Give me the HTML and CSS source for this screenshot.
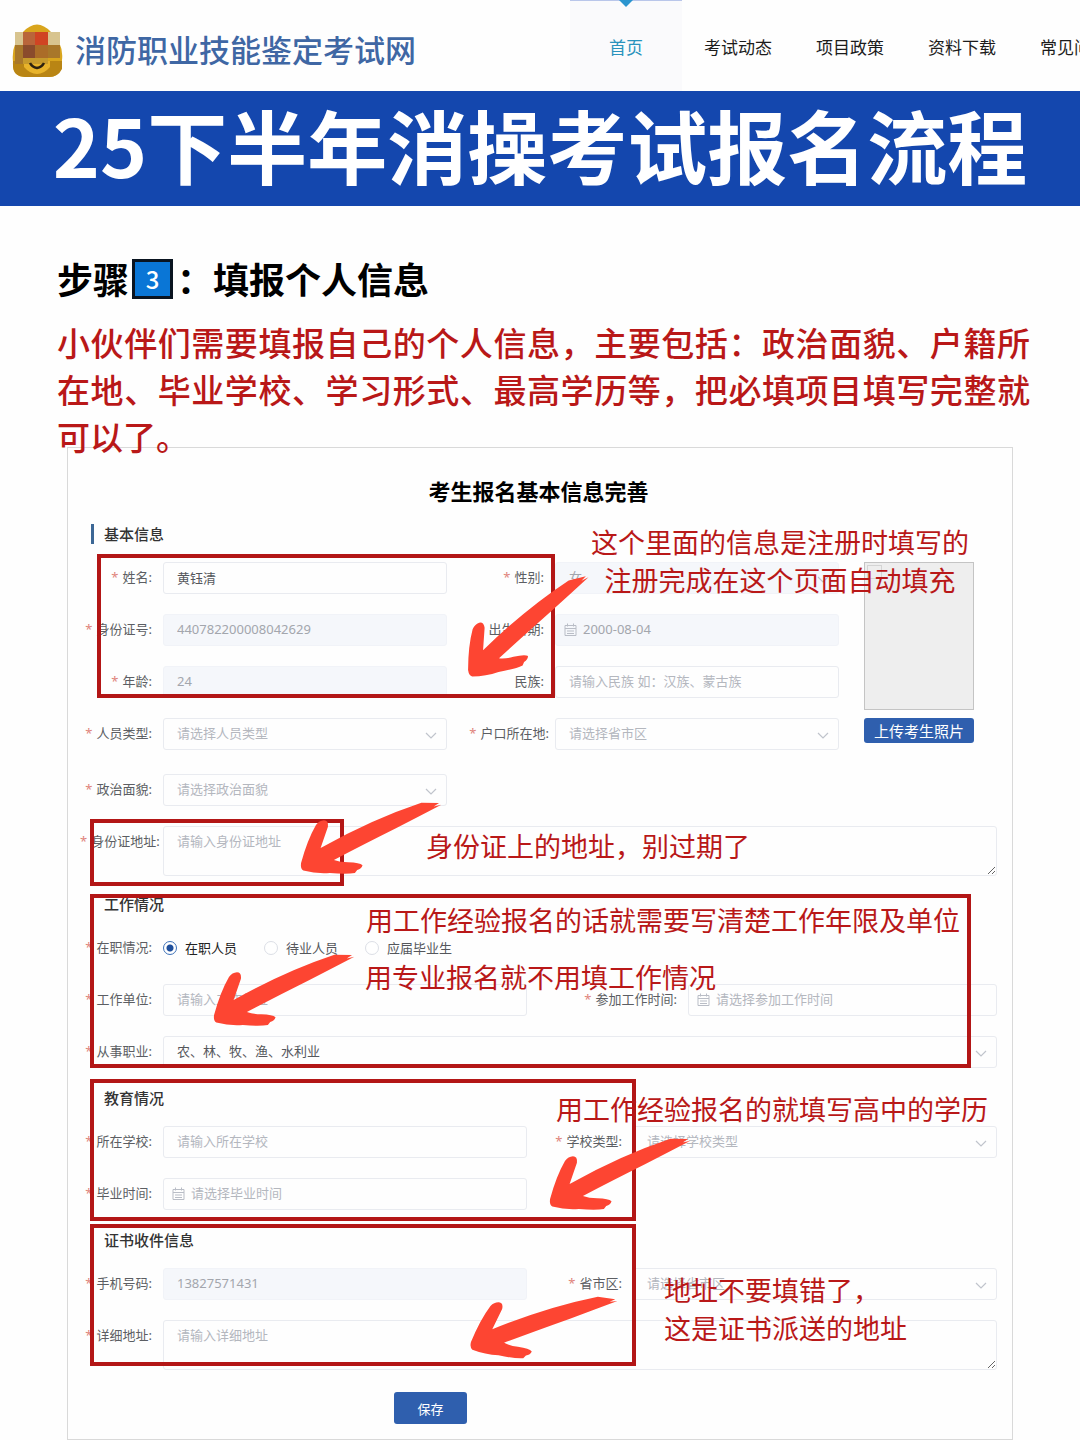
FILE: index.html
```html
<!DOCTYPE html>
<html lang="zh-CN">
<head>
<meta charset="UTF-8">
<meta name="viewport" content="width=device-width, initial-scale=1.0">
<title>25下半年消操考试报名流程</title>
<link rel="stylesheet" href="styles.css">
</head>
<body>
<svg class="sprite" aria-hidden="true">
  <symbol id="arrow" viewBox="0 0 430 225">
    <path fill="#fd4532" d="M425 14 L402 19 L418 9 L365 8 Q215 58 62 144 L84 80 Q86 61 72 61 Q58 62 48 75 Q22 120 3 190 Q1 207 10 212 Q50 222 90 219 Q140 224 165 219 L172 210 Q185 207 188 196 Q180 188 145 187 Q120 187 102 180 Q190 134 290 84 Q360 48 425 14Z"/>
  </symbol>
  <symbol id="chevron" viewBox="0 0 12 12">
    <path fill="none" stroke="#c0c4cc" stroke-width="1.2" d="M1 4l5 5 5-5"/>
  </symbol>
  <symbol id="calendar" viewBox="0 0 13 13">
    <path fill="none" stroke="#b9bdc6" d="M1 2.500h11v10H1zM1 5.500h11M3.500 0.500v3M9.500 0.500v3M3 8h7M3 10.500h7"/>
  </symbol>
</svg>

<header class="topbar">
  <div class="brand">
    <svg class="logo" viewBox="0 0 53 53" aria-hidden="true">
      <path fill="#d9a51d" d="M12 8Q26-7 40 8Q53 20 51 36Q51 53 38 53H14Q1 53 2 38Q0 20 12 8z"/>
      <path fill="#b98514" d="M2 37h49v8q-4 8-13 8H14Q2 52 2 42z"/>
      <path fill="#e8b32b" d="M13 37h26v6q-6 7-13 7t-13-7z"/>
      <path fill="#d8c48f" d="M4 8h10v13H4zM37 8h12v13H37z"/>
      <path fill="#b9653a" d="M12 8h13v13H12z"/>
      <path fill="#d04423" d="M24 8h13v13H24z"/>
      <path fill="#a8772a" d="M4 21h9v19H4zM37 21h12v13H37z"/>
      <path fill="#8a4b2c" d="M12 21h13v13H12z"/>
      <path fill="#ab6c28" d="M24 21h13v13H24z"/>
      <path fill="#c69a2c" d="M12 34h25v6H12z"/>
      <path fill="none" stroke="#2c2110" stroke-width="2.500" d="M19 39q2 4 7 5q5-1 7-5"/>
    </svg>
    <span class="site-name">消防职业技能鉴定考试网</span>
  </div>
  <nav class="nav">
    <a class="ativo" href="#">首页</a>
    <a href="#">考试动态</a>
    <a href="#">项目政策</a>
    <a href="#">资料下载</a>
    <a href="#">常见问题</a>
  </nav>
</header>

<h1 class="banner">25下半年消操考试报名流程</h1>

<main>
  <h2 class="step">步骤<span class="step-num">3</span>：<span>填报个人信息</span></h2>
  <p class="intro">小伙伴们需要填报自己的个人信息，主要包括：政治面貌、户籍所在地、毕业学校、学习形式、最高学历等，把必填项目填写完整就可以了。</p>

  <div class="card">
    <form>
      <h2 class="form-title">考生报名基本信息完善</h2>

      <!-- 基本信息 -->
      <h3>基本信息</h3>
      <div class="basic">
        <div class="grid grid-basic">
          <div class="field">
            <label class="req" for="name">姓名:</label>
            <div class="control"><input type="text" id="name" value="黄钰清"></div>
          </div>
          <div class="field">
            <label class="req" for="gender">性别:</label>
            <div class="control">
              <select id="gender" disabled><option>女</option></select>
              <svg class="chev"><use href="#chevron"/></svg>
            </div>
          </div>
          <div class="field">
            <label class="req" for="idno">身份证号:</label>
            <div class="control"><input type="text" id="idno" value="440782200008042629" disabled></div>
          </div>
          <div class="field">
            <label class="req" for="birth">出生日期:</label>
            <div class="control date">
              <svg class="cal"><use href="#calendar"/></svg>
              <input type="text" id="birth" value="2000-08-04" disabled>
            </div>
          </div>
          <div class="field">
            <label class="req" for="age">年龄:</label>
            <div class="control"><input type="text" id="age" value="24" disabled></div>
          </div>
          <div class="field">
            <label for="nation">民族:</label>
            <div class="control"><input type="text" id="nation" placeholder="请输入民族 如：汉族、蒙古族"></div>
          </div>
          <div class="field">
            <label class="req" for="ptype">人员类型:</label>
            <div class="control">
              <select id="ptype"><option>请选择人员类型</option></select>
              <svg class="chev"><use href="#chevron"/></svg>
            </div>
          </div>
          <div class="field">
            <label class="req long" for="hukou">户口所在地:</label>
            <div class="control">
              <select id="hukou"><option>请选择省市区</option></select>
              <svg class="chev"><use href="#chevron"/></svg>
            </div>
          </div>
          <div class="field spaced">
            <label class="req" for="politics">政治面貌:</label>
            <div class="control">
              <select id="politics"><option>请选择政治面貌</option></select>
              <svg class="chev"><use href="#chevron"/></svg>
            </div>
          </div>
        </div>
        <div class="photo-col">
          <div class="photo"><span class="photo-empty"></span></div>
          <button type="button" class="btn btn-upload">上传考生照片</button>
        </div>
      </div>
      <div class="field area">
        <label class="req long" for="idaddr">身份证地址:</label>
        <div class="control"><textarea id="idaddr" placeholder="请输入身份证地址"></textarea></div>
      </div>

      <!-- 工作情况 -->
      <h3>工作情况</h3>
      <div class="field" role="radiogroup" aria-labelledby="job-label">
        <span class="label req" id="job-label">在职情况:</span>
        <div class="radios">
          <label><input type="radio" name="job" checked>在职人员</label>
          <label><input type="radio" name="job">待业人员</label>
          <label><input type="radio" name="job">应届毕业生</label>
        </div>
      </div>
      <div class="grid grid-wide grid-work">
        <div class="field">
          <label class="req" for="company">工作单位:</label>
          <div class="control"><input type="text" id="company" placeholder="请输入工作单位"></div>
        </div>
        <div class="field">
          <label class="req" for="since">参加工作时间:</label>
          <div class="control date">
            <svg class="cal"><use href="#calendar"/></svg>
            <input type="text" id="since" placeholder="请选择参加工作时间">
          </div>
        </div>
      </div>
      <div class="field">
        <label class="req" for="career">从事职业:</label>
        <div class="control">
          <select id="career" class="filled"><option>农、林、牧、渔、水利业</option></select>
          <svg class="chev"><use href="#chevron"/></svg>
        </div>
      </div>

      <!-- 教育情况 -->
      <h3>教育情况</h3>
      <div class="grid grid-wide">
        <div class="field">
          <label class="req" for="school">所在学校:</label>
          <div class="control"><input type="text" id="school" placeholder="请输入所在学校"></div>
        </div>
        <div class="field">
          <label class="req" for="stype">学校类型:</label>
          <div class="control">
            <select id="stype"><option>请选择学校类型</option></select>
            <svg class="chev"><use href="#chevron"/></svg>
          </div>
        </div>
        <div class="field">
          <label class="req" for="grad">毕业时间:</label>
          <div class="control date">
            <svg class="cal"><use href="#calendar"/></svg>
            <input type="text" id="grad" placeholder="请选择毕业时间">
          </div>
        </div>
      </div>

      <!-- 证书收件信息 -->
      <h3>证书收件信息</h3>
      <div class="grid grid-wide">
        <div class="field">
          <label class="req" for="phone">手机号码:</label>
          <div class="control"><input type="text" id="phone" value="13827571431" disabled></div>
        </div>
        <div class="field">
          <label class="req" for="region">省市区:</label>
          <div class="control">
            <select id="region"><option>请选择省市区</option></select>
            <svg class="chev"><use href="#chevron"/></svg>
          </div>
        </div>
      </div>
      <div class="field area">
        <label class="req" for="addr">详细地址:</label>
        <div class="control"><textarea id="addr" placeholder="请输入详细地址"></textarea></div>
      </div>

      <div class="actions"><button type="button" class="btn btn-save">保存</button></div>
    </form>

    <!-- 标注 -->
    <div class="notes">
      <div class="frame frame-basic"></div>
      <div class="frame frame-addr"></div>
      <div class="frame frame-work"></div>
      <div class="frame frame-edu"></div>
      <div class="frame frame-cert"></div>
      <svg class="arrow arrow-basic"><use href="#arrow"/></svg>
      <svg class="arrow arrow-addr"><use href="#arrow"/></svg>
      <svg class="arrow arrow-work"><use href="#arrow"/></svg>
      <svg class="arrow arrow-edu"><use href="#arrow"/></svg>
      <svg class="arrow arrow-cert"><use href="#arrow"/></svg>
      <p class="note note-basic">这个里面的信息是注册时填写的<br>注册完成在这个页面自动填充</p>
      <p class="note note-addr">身份证上的地址，别过期了</p>
      <p class="note note-work">用工作经验报名的话就需要写清楚工作年限及单位</p>
      <p class="note note-major">用专业报名就不用填工作情况</p>
      <p class="note note-edu">用工作经验报名的就填写高中的学历</p>
      <p class="note note-cert">地址不要填错了，<br>这是证书派送的地址</p>
    </div>
  </div>
</main>
</body>
</html>
```
FILE: styles.css
```css
:root { --azul:#1447ae; --btn:#2f5fae; --red:#b91818; --line:#e9ebf0; --ph:#b4b7be; }
* { box-sizing:border-box; margin:0; padding:0; }
body {
  font-family:"Noto Sans CJK SC",sans-serif;
  background:#fefefe; color:#000;
}
.sprite { position:absolute; width:0; height:0; }

/* topo */
.topbar { display:flex; height:91px; overflow:hidden; }
.brand {
  display:flex; flex:none; align-items:center; gap:11px;
  padding:10px 0 0 11px; margin-right:154px;
}
.logo { width:53px; height:53px; }
.site-name { padding-bottom:4px; font-size:31px; line-height:40px; font-weight:500; color:#3f67a4; white-space:nowrap; }
.nav { display:flex; flex:none; }
.nav a {
  position:relative; width:112px; padding-top:2px;
  display:flex; align-items:center; justify-content:center;
  font-size:17px; color:#1c1c1c; text-decoration:none;
}
.nav .ativo { background:#fafafc; color:#2a93bd; box-shadow:inset 0 1px #b9c6ea; }
.nav .ativo::before {
  content:""; position:absolute; top:0; left:50%; margin-left:-7px;
  border:7px solid transparent; border-top-color:#2b95cf; border-bottom:0;
}
.banner {
  background:var(--azul); color:#fff; text-align:center; padding-bottom:10px;
  font-size:80px; line-height:105px; font-weight:700; white-space:nowrap;
}

main { padding:48px 0 0; }
.step {
  display:flex; align-items:center; padding:0 57px;
  font-size:36px; line-height:48px; font-weight:700;
}
.step-num {
  width:41px; height:40px; margin:2px 4px 0 3px; border:3px solid #0a1420;
  background:#0a76d6; color:#fff; font-size:24px; line-height:34px; font-weight:500; text-align:center;
}
.intro {
  position:relative; z-index:2; margin:17px 50px 0 57px;
  font-size:33px; line-height:47px; font-weight:500; color:var(--red); text-align:justify;
}

.card {
  position:relative; margin:-13px 67px 0; padding:28px 15px 15px 12px;
  border:1px solid #d9d9d9;
}
.form-title { font-size:22px; line-height:28px; font-weight:700; text-align:center; }
h3 {
  margin:20px 0 18px 11px; padding-left:10px; border-left:3px solid #3c6795;
  font-size:15px; line-height:20px; font-weight:500; color:#333;
}
form { display:flex; flex-direction:column; }
.field { display:flex; min-height:32px; }
.field + .field, .grid + .field, .field + .grid, .basic + .field { margin-top:20px; }
.grid { display:grid; row-gap:20px; }
.grid .field + .field { margin-top:0; }
.grid-basic { flex:1; grid-template-columns:367fr 392fr; }
.grid-wide { grid-template-columns:447fr 470fr; }
.grid .spaced { padding-top:4px; min-height:36px; }

.field > label, .label {
  flex:none; width:83px; padding-right:11px; text-align:right; white-space:nowrap;
  font-family:"Noto Sans","Noto Sans CJK SC",sans-serif;
  font-size:13px; line-height:30px; color:#5c5e63;
}
.grid-basic .field:nth-child(even) > label { width:108px; }
.grid-wide .field:nth-child(even) > label { width:106px; }
.grid-work .field:nth-child(even) > label { width:161px; }
.field > .long, .grid-basic .field > .long { padding-right:6px; }
.req::before { content:"*"; color:#e0837c; margin-right:4px; }

.control { position:relative; flex:1; display:flex; min-width:0; }
.control input, .control select, .control textarea {
  width:100%; height:32px; padding:0 13px 2px; border:1px solid var(--line); border-radius:3px;
  background:transparent; color:#55575c; appearance:none; outline:none;
  font-family:"Noto Sans","Noto Sans CJK SC",sans-serif; font-size:13px;
}
.control select { color:var(--ph); }
.control select.filled { color:#55575c; }
.control input:disabled, .control select:disabled {
  background:#f5f7fb; border-color:#f1f3f8; color:#a3a6ad; opacity:1;
}
.control textarea { height:50px; padding-top:4px; line-height:20px; resize:vertical; display:block; }
.area { height:48px; }
.area + .actions { margin-top:24px; }
::placeholder { color:var(--ph); opacity:1; }
.control.date input { padding-left:27px; }
.cal { position:absolute; left:9px; top:9px; width:13px; height:13px; }
.chev { position:absolute; right:10px; top:11px; width:12px; height:12px; pointer-events:none; }

.basic { display:flex; gap:25px; }
.photo-col { width:133px; display:flex; flex-direction:column; gap:8px; }
.photo { width:110px; height:148px; padding:2px; background:#eee; border:1px solid #c4c4c4; }
.photo-empty { display:block; width:15px; height:14px; border:1px solid #d4d4d4; }
.btn { border:none; border-radius:3px; background:var(--btn); color:#fff; font-family:inherit; cursor:pointer; }
.btn-upload { width:110px; height:25px; font-size:15px; line-height:24px; }
.btn-save { width:73px; height:32px; font-size:13px; }
.actions { padding-left:314px; }

.radios { display:flex; align-items:center; gap:27px; }
.radios label {
  display:flex; align-items:center; gap:8px;
  font-size:13px; line-height:20px; color:#55575c;
}
.radios label:has(:checked) { color:#222; }
.radios input {
  appearance:none; width:14px; height:14px; border:1px solid #dcdfe6; border-radius:50%; background:#fff;
}
.radios input:checked { border-color:#3d71b8; background:radial-gradient(circle,#1f4f9c 3px,#fff 4px); }

/* marcações sobre o formulário */
.notes { position:absolute; inset:0; pointer-events:none; color:var(--red); }
.frame { position:absolute; border:4px solid #b31616; }
.frame-basic { left:29px; top:106px; width:458px; height:144px; }
.frame-addr { left:22px; top:371px; width:254px; height:67px; }
.frame-work { left:22px; top:446px; width:881px; height:174px; }
.frame-edu { left:22px; top:631px; width:546px; height:142px; }
.frame-cert { left:22px; top:776px; width:546px; height:142px; }
.arrow { position:absolute; width:143px; height:75px; overflow:visible; transform-origin:3px 71px; }
.arrow-basic { left:401px; top:158px; transform:rotate(-15deg); }
.arrow-addr { left:232px; top:352px; }
.arrow-work { left:145px; top:504px; }
.arrow-edu { left:481px; top:688px; }
.arrow-cert { left:401px; top:831px; transform:rotate(7deg); }
.note { position:absolute; font-size:27px; line-height:38px; white-space:nowrap; }
.note-basic { left:523px; top:75px; text-align:center; }
.note-addr { left:358px; top:379px; }
.note-work { left:298px; top:453px; }
.note-major { left:297px; top:510px; }
.note-edu { left:488px; top:642px; }
.note-cert { left:596px; top:823px; }
```
